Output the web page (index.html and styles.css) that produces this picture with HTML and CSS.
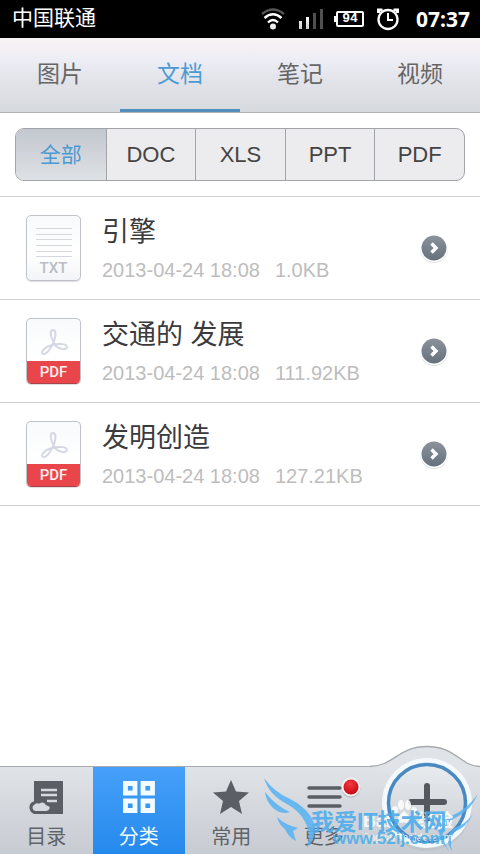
FILE: index.html
```html
<!DOCTYPE html>
<html lang="zh-CN">
<head>
<meta charset="utf-8">
<meta name="viewport" content="width=device-width, initial-scale=1">
<title>文档</title>
<link rel="stylesheet" href="styles.css">
</head>
<body>
<svg class="defs" aria-hidden="true">
  <defs>
    <linearGradient id="disc" x1="0" y1="0" x2="0" y2="1"><stop offset="0" stop-color="#8b939c"/><stop offset="1" stop-color="#66717c"/></linearGradient>
    <linearGradient id="bar" x1="0" y1="0" x2="0" y2="1"><stop offset="0" stop-color="#e0e3e7"/><stop offset=".2" stop-color="#e0e3e7"/><stop offset="1" stop-color="#c7cbd2"/></linearGradient>
    <linearGradient id="button" x1="0" y1="0" x2="0" y2="1"><stop offset="0" stop-color="#e9ecef"/><stop offset="1" stop-color="#c8cdd3"/></linearGradient>
    <linearGradient id="signal" x1="0" y1="0" x2="0" y2="1"><stop offset="0" stop-color="#fff"/><stop offset="1" stop-color="#ccc"/></linearGradient>
    <radialGradient id="red" cx=".45" cy=".3" r=".7"><stop offset="0" stop-color="#f33b40"/><stop offset="1" stop-color="#c70710"/></radialGradient>
    <symbol id="chevron" viewBox="0 0 32 32">
      <circle cx="16" cy="17" r="14" fill="#dfe1e3"/>
      <circle cx="16" cy="16" r="14" fill="#fff"/>
      <circle cx="16" cy="16" r="12.500" fill="url(#disc)"/>
      <path d="M13.500 11.500l4.500 4.500-4.500 4.500" fill="none" stroke="#fff" stroke-width="3.400"/>
    </symbol>
    <symbol id="acrobat" viewBox="0 0 28 28">
      <path d="M13 13C9 5 11 2 13 2s4 3 1 11c-3 8-8 14-11 13s1-7 9-9 15-1 15 2-7 3-11-1c-2-2-2-3-3-5z" fill="none" stroke="#d3d8e3" stroke-width="1.900"/>
    </symbol>
  </defs>
</svg>
<div class="app">
  <header class="status">
    <span class="carrier">中国联通</span>
    <span class="indicators">
      <svg width="26" height="24" viewBox="0 0 26 24" fill="none">
        <path d="M2 7Q13-2 24 7" stroke="#555" stroke-width="2.400"/>
        <path d="M4.500 11Q13 3.500 21.500 11M8 15.500Q13 10.500 18 15.500" stroke="#fff" stroke-width="2.400"/>
        <circle cx="13" cy="19.500" r="3" fill="#eee"/>
      </svg>
      <svg width="26" height="24" viewBox="0 0 26 24">
        <path d="M1 14h3v8H1zM8 10h3v12H8z" fill="url(#signal)"/><path d="M15 6h3v16h-3zM22 2h3v20h-3z" fill="#505050"/>
      </svg>
      <span class="battery">94</span>
      <svg width="24" height="24" viewBox="0 0 24 24" fill="none" stroke="#fff">
        <path d="M2.500 6V3h4M21.500 6V3h-4" stroke-width="3"/><circle cx="12" cy="12.500" r="9.500" stroke-width="2.300" fill="#000"/><path d="M12 6v7h5" stroke-width="2"/>
      </svg>
      <time class="clock">07:37</time>
    </span>
  </header>
  <nav class="tabs">
    <a href="#images">图片</a>
    <a href="#docs" class="current" aria-current="page">文档</a>
    <a href="#notes">笔记</a>
    <a href="#videos">视频</a>
  </nav>
  <main class="content">
    <div class="filters">
      <button type="button" class="selected" aria-pressed="true">全部</button>
      <button type="button">DOC</button>
      <button type="button">XLS</button>
      <button type="button">PPT</button>
      <button type="button">PDF</button>
    </div>
    <ul class="files">
      <li>
        <div class="thumb txt"><svg width="36" height="31" viewBox="0 0 36 31"><path d="M0 1.500h36M0 7.500h36M0 12.500h36M0 18.500h36M0 24.500h36M0 29.500h36" stroke="#d5d7dc"/></svg><span>TXT</span></div>
        <div class="info"><h2>引擎</h2><p><time>2013-04-24 18:08</time><span>1.0KB</span></p></div>
        <button type="button" class="open" aria-label="打开"><svg width="32" height="32"><use href="#chevron"/></svg></button>
      </li>
      <li>
        <div class="thumb pdf"><svg width="28" height="28"><use href="#acrobat"/></svg><span>PDF</span></div>
        <div class="info"><h2>交通的 发展</h2><p><time>2013-04-24 18:08</time><span>111.92KB</span></p></div>
        <button type="button" class="open" aria-label="打开"><svg width="32" height="32"><use href="#chevron"/></svg></button>
      </li>
      <li>
        <div class="thumb pdf"><svg width="28" height="28"><use href="#acrobat"/></svg><span>PDF</span></div>
        <div class="info"><h2>发明创造</h2><p><time>2013-04-24 18:08</time><span>127.21KB</span></p></div>
        <button type="button" class="open" aria-label="打开"><svg width="32" height="32"><use href="#chevron"/></svg></button>
      </li>
    </ul>
  </main>
  <footer class="dock">
    <button type="button">
      <svg width="36" height="36" viewBox="0 0 36 36"><path d="M6 2h29v33H6z" fill="#5b5e64"/><path d="M13 11h16M13 16h16M19 22h10" stroke="#d6dade" stroke-width="2.500"/><path d="M7 33.500a5 5 0 0 1-1-9.500 5 5 0 0 1 5-1 6 6 0 0 1 8 2q5 1 4 5-1 3.500-5 3.500z" fill="#d6dade" stroke="#5b5e64" stroke-width="3"/></svg>
      目录
    </button>
    <button type="button" class="active">
      <svg width="36" height="36" viewBox="0 0 36 36"><path d="M4.500 4.500h9.500v9.500H4.500zM22 4.500h9.500v9.500H22zM4.500 22h9.500v9.500H4.500zM22 22h9.500v9.500H22z" fill="none" stroke="#f2fbff" stroke-width="4.800"/></svg>
      分类
    </button>
    <button type="button">
      <svg width="36" height="36" viewBox="0 0 36 36"><path d="M18 1l5 11.500 13 1-10 8.500 3 13-11-7-11 7 3-13L0 13.500l13-1z" fill="#5b5e64"/></svg>
      常用
    </button>
    <button type="button" class="more">
      <svg width="36" height="36" viewBox="0 0 36 36"><path d="M3 9h31M3 18h31M3 27h31" stroke="#5b5e64" stroke-width="3.400" stroke-linecap="round"/></svg>
      更多
      <svg class="dot" width="22" height="22" viewBox="0 0 22 22"><circle cx="11" cy="12" r="9.500" fill="#0003"/><circle cx="11" cy="11" r="9.500" fill="#f4eeee"/><circle cx="11" cy="11" r="7.500" fill="url(#red)"/></svg>
    </button>
    <button type="button" class="add" aria-label="添加">
      <svg width="110" height="109" viewBox="0 0 110 109">
        <path d="M0 109V21.500C24 21 28 1.500 57 1.500S90 21 110 21.500V109z" fill="url(#bar)"/>
        <path d="M0 21.500C24 21 28 1.500 57 1.500S90 21 110 21.500" fill="none" stroke="#a5a8ac" stroke-width="1.300"/>
        <circle cx="57" cy="61" r="45" fill="#adb3b9" opacity=".3"/>
        <circle cx="57" cy="58" r="45" fill="#f3f9fc"/>
        <circle cx="57" cy="58" r="38.500" fill="url(#button)" stroke="#4889c2" stroke-width="3.500"/>
        <path d="M57 41v34M41 57h33" stroke="#55585e" stroke-width="6" stroke-linecap="round"/>
      </svg>
    </button>
    <div class="watermark" aria-hidden="true">
      <svg class="wings" width="216" height="76" viewBox="0 0 216 76" fill="#56b2f3">
        <path d="M0 0Q10 14 26 21 46 31 51 48 52 60 43 70 48 54 40 42 35 33 23 26 5 17 0 0z"/>
        <path d="M1 14Q12 28 26 34 17 37 9 30 2 23 1 14z"/>
        <path d="M13 39Q21 47 34 50L29 53 32 63Q24 59 21 51 15 47 13 39z"/>
        <path d="M214 16Q202 32 189 37 172 46 176 62L185 73Q176 60 180 51 184 43 193 39 206 33 214 16z"/>
        <path d="M209 36Q202 50 190 54 185 63 188 73 179 60 190 50 202 46 209 36z"/>
      </svg>
      <span class="baidu">Bai<svg width="26" height="24" viewBox="0 0 26 24" fill="#fff"><ellipse cx="4" cy="10" rx="3" ry="4"/><ellipse cx="10" cy="5" rx="3" ry="5"/><ellipse cx="17" cy="5" rx="3" ry="5"/><ellipse cx="23" cy="11" rx="3" ry="4"/><path d="M13 11q9 8 6 11-3 2-6 0-3 2-6 0-3-3 6-11z"/></svg>经验</span>
      <span class="baidu-url">jingyan.baidu.com</span>
      <span class="site">我爱IT技术网</span>
      <span class="url">www.52ij.com</span>
    </div>
  </footer>
</div>
</body>
</html>
```
FILE: styles.css
```css
* { box-sizing: border-box; }
body { margin: 0; background: #fff; color: #3b3b3d; font-family: "Liberation Sans", "Noto Sans CJK SC", sans-serif; }
button { border: 0; padding: 0; margin: 0; background: none; color: inherit; font: inherit; }
svg { display: block; flex: none; }
.defs { position: absolute; width: 0; height: 0; }
.app { display: flex; flex-direction: column; min-height: 100vh; }

.status { display: flex; align-items: center; justify-content: space-between; height: 38px; padding: 0 10px 0 12px; background: #000; color: #fff; }
.carrier { font-size: 21px; line-height: 32px; padding-bottom: 2px; }
.indicators { display: flex; align-items: center; gap: 12px; }
.battery { position: relative; width: 28px; height: 16px; border: 2px solid #fff; border-radius: 2px; font: bold 13px/12px "Liberation Mono", monospace; text-align: center; }
.battery::before { content: ""; position: absolute; left: -4px; top: 3px; width: 2px; height: 6px; background: #fff; }
.clock { margin-left: 4px; font: bold 21px/24px "Noto Sans", sans-serif; }

.tabs { display: grid; grid-template-columns: repeat(4, 1fr); height: 75px; background: linear-gradient(#f7f3f4, #ededf5 30%, #e2e3e9 60%, #d6dadf); border-bottom: 1px solid #afb1b4; }
.tabs a { display: flex; align-items: center; justify-content: center; padding-bottom: 3px; color: #666; font-size: 23px; text-decoration: none; border-bottom: 3px solid transparent; }
.tabs .current { color: #4b9ad2; border-color: #518fbd; }

.content { flex: 1; padding-top: 15px; }
.filters { display: grid; grid-template-columns: repeat(5, 1fr); height: 53px; margin: 0 15px 15px; border: 1px solid #a1a5aa; border-radius: 9px; background: #ecebed; overflow: hidden; }
.filters button { font-size: 22px; color: #444; border-left: 1px solid #a1a5aa; }
.filters .selected { border-left: 0; padding-bottom: 4px; background: linear-gradient(#c3c8cf, #dee1e5); color: #4b9ad2; font-size: 21px; }

.files { margin: 0; padding: 0; list-style: none; border-top: 1px solid #d1d1d1; }
.files li { display: flex; align-items: center; height: 103px; padding: 0 30px 0 26px; border-bottom: 1px solid #d1d1d1; }
.thumb { display: flex; flex-direction: column; align-items: center; width: 55px; height: 66px; border: 1px solid #bfc3c9; border-radius: 5px; background: linear-gradient(#f8fafb, #fff 60%, #f2f4f7); font: 500 15px Roboto, sans-serif; overflow: hidden; box-shadow: 0 1px 1px #ddd; }
.txt { padding-top: 11px; color: #b9bdc4; }
.txt span { line-height: 20px; }
.pdf { justify-content: space-between; padding-top: 9px; border-bottom-color: #a94349; }
.pdf span { width: 55px; height: 22px; line-height: 22px; background: #e9464c; color: #fff0ef; text-align: center; }
.info { flex: 1; padding-left: 21px; }
.info h2 { margin: 0; padding-top: 2px; font-size: 27px; line-height: 40px; font-weight: 400; }
.info p { display: flex; gap: 15px; margin: 0; padding-top: 2px; color: #bdbdbd; font-size: 20px; line-height: 32px; }

.dock { position: relative; display: grid; grid-template: 100% / repeat(4, 1fr) 110px; height: 88px; border-top: 1px solid #a7aaae; background: linear-gradient(#e0e3e7, #c7cbd2); color: #606368; }
.dock button { position: relative; display: flex; flex-direction: column; align-items: center; padding-top: 12px; font-size: 20px; line-height: 44px; }
.dock .active { color: #f2fbff; background: linear-gradient(#46a0fa, #2589ec); }
.dock .dot { position: absolute; top: 9px; right: 8px; }
.dock .add { align-self: end; padding: 0; }
.watermark { position: absolute; right: 0; bottom: 0; width: 216px; height: 76px; overflow: hidden; pointer-events: none; white-space: nowrap; opacity: .85; }
.watermark span { position: absolute; }
.wings { position: absolute; left: 0; top: 0; }
.watermark .site { left: 47px; top: 28px; color: #47abed; font-size: 23px; line-height: 32px; font-weight: bold; }
.watermark .url { left: 69px; top: 50px; color: #48afe9; font-size: 17px; line-height: 22px; font-weight: bold; }
.watermark .baidu { display: flex; left: 99px; top: 22px; color: #fff; font-size: 18px; line-height: 42px; font-weight: bold; }
.watermark .baidu-url { left: 100px; top: 50px; color: #fff; font-size: 11px; line-height: 18px; }
```
